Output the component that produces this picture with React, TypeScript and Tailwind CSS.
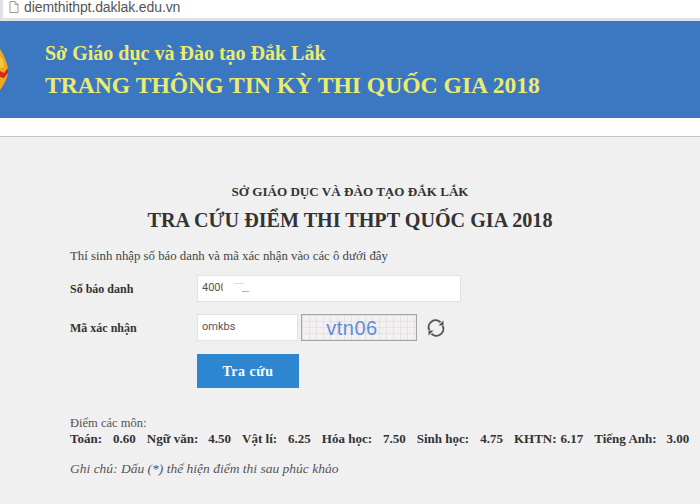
const SCORES = [
  { label: 'Toán:', value: '0.60', gap: 'ml-[11px]' },
  { label: 'Ngữ văn:', value: '4.50', gap: 'ml-[10px]' },
  { label: 'Vật lí:', value: '6.25', gap: 'ml-[11px]' },
  { label: 'Hóa học:', value: '7.50', gap: 'ml-[11px]' },
  { label: 'Sinh học:', value: '4.75', gap: 'ml-[11px]' },
  { label: 'KHTN:', value: '6.17', gap: 'ml-[4px]' },
  { label: 'Tiếng Anh:', value: '3.00', gap: 'ml-[10px]' },
];

function Emblem() {
  return (
    <svg width="9" height="42" viewBox="0 0 9 42" className="shrink-0">
      <path d="M0 0 L3 5 L6 12 L8 19 L8 25 L5 33 L2 38 L0 41 Z" fill="#f0a81e" />
      <path d="M0 22 L4 24 L8 19 L8 24 L4 29 L0 28 Z" fill="#d8281c" />
      <path d="M0 7 L3 11 L4 18 L0 19 Z" fill="#f6c63c" />
    </svg>
  );
}

function CaptchaGrid() {
  return (
    <svg className="absolute inset-0 w-full h-full" xmlns="http://www.w3.org/2000/svg">
      <defs>
        <pattern id="captcha-grid" width="7" height="6" patternUnits="userSpaceOnUse">
          <path d="M7 0 L0 0 L0 6" fill="none" stroke="#dcd3d6" strokeWidth="1" />
        </pattern>
      </defs>
      <rect width="100%" height="100%" fill="url(#captcha-grid)" />
    </svg>
  );
}

function RefreshIcon() {
  return (
    <svg width="20" height="20" viewBox="0 0 20 20" className="ml-[9px] text-[#555]">
      <path d="M3.2 12 A7 7 0 0 1 14.5 4.2" fill="none" stroke="currentColor" strokeWidth="2" />
      <path d="M16.8 8 A7 7 0 0 1 5.5 15.8" fill="none" stroke="currentColor" strokeWidth="2" />
      <path d="M17.5 2.5 V7.5 H12.5 Z" fill="currentColor" />
      <path d="M2.5 17.5 V12.5 H7.5 Z" fill="currentColor" />
    </svg>
  );
}

export default function App() {
  return (
    <div className="w-[700px] h-[504px] overflow-hidden bg-[#f0f0f0] font-['Liberation_Serif',serif] text-[#333]">
      <div className="h-[21px] bg-[#dfe3e8] pb-[3px]">
        <div className="h-[18px] bg-white flex items-center pl-[6px] gap-[5px] ml-[3px] pb-[5px]">
          <svg width="10" height="12" viewBox="0 0 10 12" className="shrink-0">
            <path d="M1 .5 H6 L9 3.5 V11.5 H1 Z M6 .5 V3.5 H9" fill="#fff" stroke="#9a9a9a" />
          </svg>
          <span className="font-['Liberation_Sans',sans-serif] text-[14px] leading-none text-[#555] tracking-[-0.1px]">
            diemthithpt.daklak.edu.vn
          </span>
        </div>
      </div>

      <div className="h-[97px] bg-[#3c78c2] flex items-center">
        <Emblem />
        <div className="ml-[36px] text-[#ecec6c] font-bold">
          <div className="text-[20px] leading-[24px] mb-[6px]">Sở Giáo dục và Đào tạo Đắk Lắk</div>
          <div className="text-[23.6px] leading-[28px]">TRANG THÔNG TIN KỲ THI QUỐC GIA 2018</div>
        </div>
      </div>

      <div className="h-[18px] bg-[#fdfdfb]" />
      <div className="h-[1px] bg-[#c4c4c4]" />

      <div className="pt-[47px]">
        <div className="text-center font-bold text-[13.1px] leading-[16px] text-[#333]">SỞ GIÁO DỤC VÀ ĐÀO TẠO ĐẮK LẮK</div>
        <div className="text-center font-bold text-[20.15px] leading-[24px] mt-[8px] text-[#333]">
          TRA CỨU ĐIỂM THI THPT QUỐC GIA 2018
        </div>

        <div className="pl-[70px]">
          <div className="text-[12.8px] leading-[16px] mt-[16px] text-[#444]">
            Thí sinh nhập số báo danh và mã xác nhận vào các ô dưới đây
          </div>

          <div className="flex items-center mt-[11px]">
            <label className="w-[127px] font-bold text-[12px] text-[#333]">Số báo danh</label>
            <div className="relative w-[264px] h-[27px] bg-white border border-[#e2e2e2] flex items-center pl-[4px] font-['Roboto',sans-serif] text-[11px] text-[#555]">
              4000
              <span className="absolute left-[25px] top-[6px] w-[6px] h-[14px] bg-white" />
              <span className="absolute left-[44px] top-[15px] w-[7px] h-[1px] bg-[#b0b0b0]" />
              <span className="absolute left-[36px] top-[7px] w-[10px] h-[1px] bg-[#e0e0e0]" />
            </div>
          </div>

          <div className="flex items-center mt-[12px]">
            <label className="w-[127px] font-bold text-[12px] text-[#333]">Mã xác nhận</label>
            <div className="w-[101px] h-[27px] bg-white border border-[#e2e2e2] flex items-center pl-[4px] font-['Roboto',sans-serif] text-[11px] text-[#555]">
              omkbs
            </div>
            <div className="relative w-[116px] h-[27px] ml-[3px] bg-[#f4f0f2] border border-[#a3a3a3] flex items-center justify-center overflow-hidden">
              <CaptchaGrid />
              <span className="relative font-['Liberation_Sans',sans-serif] text-[20px] leading-none tracking-[0.5px] text-[#5f8ed2] pr-[14px]">vtn06</span>
            </div>
            <RefreshIcon />
          </div>

          <button className="block ml-[127px] mt-[13px] w-[102px] h-[34px] bg-[#2e86d0] text-white font-bold text-[14px] tracking-[0.5px]">
            Tra cứu
          </button>

          <div className="text-[12.5px] leading-[15px] mt-[28px] text-[#555]">Điểm các môn:</div>
          <div className="flex text-[13px] leading-[15px] font-bold text-[#333] whitespace-nowrap">
            {SCORES.map((s, i) => (
              <span key={s.label} className={i === 0 ? '' : 'ml-[11px]'}>
                {s.label}
                <span className={s.gap}>{s.value}</span>
              </span>
            ))}
          </div>
          <div className="text-[13.5px] italic leading-[16px] mt-[15px] text-[#555]">
            Ghi chú: Dấu (*) thể hiện điểm thi sau phúc khảo
          </div>
        </div>
      </div>
    </div>
  );
}
